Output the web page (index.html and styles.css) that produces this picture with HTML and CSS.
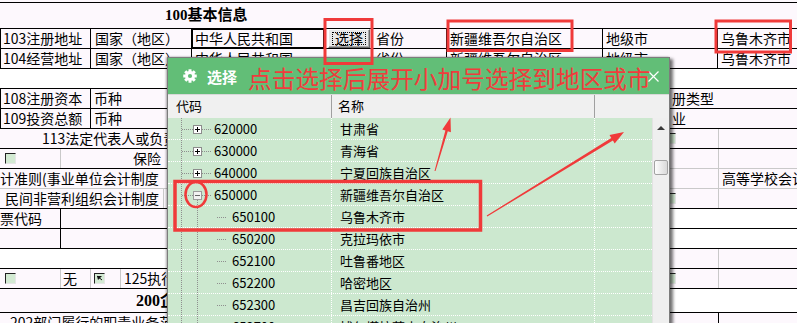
FILE: index.html
```html
<!DOCTYPE html>
<html lang="zh-CN">
<head>
<meta charset="UTF-8">
<title>基本信息 - 选择地区</title>
<link rel="stylesheet" href="styles.css">
</head>
<body>
<div class="page">
  <div class="topline"></div>
  <div class="caption">100基本信息</div>

  <!-- address rows -->
  <div class="row">
    <div class="c w-label first">103注册地址</div>
    <div class="c w-country nob">国家（地区）</div>
    <div class="c w-input active">中华人民共和国</div>
    <div class="c w-btn nob"><span class="btn"><span class="focus">选择</span></span></div>
    <div class="c w-prov">省份</div>
    <div class="c w-provv">新疆维吾尔自治区</div>
    <div class="c w-city">地级市</div>
    <div class="c w-cityv nob">乌鲁木齐市</div>
  </div>
  <div class="row">
    <div class="c w-label first">104经营地址</div>
    <div class="c w-country nob">国家（地区）</div>
    <div class="c w-input plain">中华人民共和国</div>
    <div class="c w-btn nob"></div>
    <div class="c w-prov">省份</div>
    <div class="c w-provv">新疆维吾尔自治区</div>
    <div class="c w-city">地级市</div>
    <div class="c w-cityv nob">乌鲁木齐市</div>
  </div>

  <div class="lower">
    <div class="col-left">
      <div class="lrow white"></div>
      <div class="lrow">
        <div class="c w-label first">108注册资本</div>
        <div class="c nob">币种</div>
      </div>
      <div class="lrow">
        <div class="c w-label first">109投资总额</div>
        <div class="c nob">币种</div>
      </div>
      <div class="lrow">
        <div class="c nob pad-113">113法定代表人或负责人信息</div>
      </div>
      <div class="lrow">
        <div class="c w-cb gray"><span class="cb"></span></div>
        <div class="c nob grow right-text">保险</div>
      </div>
      <div class="lrow soft">
        <div class="c nob flush">计准则(事业单位会计制度</div>
      </div>
      <div class="lrow">
        <div class="c w-npo gray">民间非营利组织会计制度</div>
      </div>
      <div class="lrow">
        <div class="c w-cb flush">票代码</div>
      </div>
      <div class="lrow">
        <div class="c w-cb"></div>
      </div>
      <div class="lrow white"></div>
      <div class="lrow">
        <div class="c w-cb gray"><span class="cb"></span></div>
        <div class="c w-small gray">无</div>
        <div class="c w-small gray"><span class="cb on"><svg width="9" height="9" viewBox="0 0 9 9"><path d="M2 2h5L3 6z" fill="#111"/><path d="M2 2l5 4" stroke="#111"/></svg></span></div>
        <div class="c nob">125执行情况</div>
      </div>
      <div class="lrow tall">
        <div class="c nob head-200">200企业基本情况</div>
      </div>
      <div class="lrow">
        <div class="c nob pad-202">202部门履行的职责业务范围</div>
      </div>
    </div>

    <div class="col-mid"></div>

    <div class="col-right">
      <div class="lrow white"></div>
      <div class="lrow"><div class="c nob pad-r">册类型</div></div>
      <div class="lrow"><div class="c nob pad-r">业</div></div>
      <div class="lrow">
        <div class="c w-rcb gray"><span class="cb r"></span></div>
        <div class="c nob"></div>
      </div>
      <div class="lrow soft">
        <div class="c w-rcb gray"></div>
        <div class="c nob"></div>
      </div>
      <div class="lrow soft">
        <div class="c w-rcb gray"></div>
        <div class="c nob">高等学校会计制度</div>
      </div>
      <div class="lrow">
        <div class="c w-rcb gray"><span class="cb r"></span></div>
        <div class="c nob"></div>
      </div>
      <div class="lrow white"></div>
      <div class="lrow white"></div>
      <div class="lrow">
        <div class="c w-rcb gray"></div>
        <div class="c nob"></div>
      </div>
      <div class="lrow">
        <div class="c w-rcb gray"><span class="cb r"></span></div>
        <div class="c nob"></div>
      </div>
      <div class="lrow tall white"></div>
      <div class="lrow">
        <div class="c w-rcb"></div>
        <div class="c nob"></div>
      </div>
    </div>
  </div>

  <!-- Select dialog -->
  <div class="dialog">
    <div class="dlg-title">
      <svg class="gear" width="14" height="14" viewBox="0 0 16 16">
        <g fill="#fff">
          <rect x="6.3" y="0.3" width="3.4" height="3.4"/>
          <rect x="6.3" y="0.3" width="3.4" height="3.4" transform="rotate(45 8 8)"/>
          <rect x="6.3" y="0.3" width="3.4" height="3.4" transform="rotate(90 8 8)"/>
          <rect x="6.3" y="0.3" width="3.4" height="3.4" transform="rotate(135 8 8)"/>
          <rect x="6.3" y="0.3" width="3.4" height="3.4" transform="rotate(180 8 8)"/>
          <rect x="6.3" y="0.3" width="3.4" height="3.4" transform="rotate(225 8 8)"/>
          <rect x="6.3" y="0.3" width="3.4" height="3.4" transform="rotate(270 8 8)"/>
          <rect x="6.3" y="0.3" width="3.4" height="3.4" transform="rotate(315 8 8)"/>
          <circle cx="8" cy="8" r="5.6"/>
        </g>
        <circle cx="8" cy="8" r="2.4" fill="#62be77"/>
      </svg>
      <span class="dlg-name">选择</span>
      <svg class="dlg-close" width="11" height="11" viewBox="0 0 11 11">
        <path d="M0.5 0.5l10 10M10.5 0.5l-10 10" stroke="#fff" stroke-width="1.2"/>
      </svg>
    </div>
    <div class="dlg-head">
      <div class="hc hc-code">代码</div>
      <div class="hc hc-name">名称</div>
      <div class="hc hc-rest"></div>
    </div>
    <div class="dlg-main">
      <div class="grid">
        <div class="trow">
          <div class="tc code"><svg class="guide" width="46" height="21"><path class="dot" d="M13.5 0V21M14 11.5H44"/><rect x="25.5" y="7.5" width="8" height="8" fill="#fff" stroke="#8c8c8c"/><path d="M27 11.5H32M29.5 9V14" stroke="#000"/></svg>620000</div>
          <div class="tc name">甘肃省</div>
          <div class="tc rest"></div>
        </div>
        <div class="trow">
          <div class="tc code"><svg class="guide" width="46" height="21"><path class="dot" d="M13.5 0V21M14 11.5H44"/><rect x="25.5" y="7.5" width="8" height="8" fill="#fff" stroke="#8c8c8c"/><path d="M27 11.5H32M29.5 9V14" stroke="#000"/></svg>630000</div>
          <div class="tc name">青海省</div>
          <div class="tc rest"></div>
        </div>
        <div class="trow">
          <div class="tc code"><svg class="guide" width="46" height="21"><path class="dot" d="M13.5 0V21M14 11.5H44"/><rect x="25.5" y="7.5" width="8" height="8" fill="#fff" stroke="#8c8c8c"/><path d="M27 11.5H32M29.5 9V14" stroke="#000"/></svg>640000</div>
          <div class="tc name">宁夏回族自治区</div>
          <div class="tc rest"></div>
        </div>
        <div class="trow">
          <div class="tc code"><svg class="guide" width="46" height="21"><path class="dot" d="M13.5 0V21M14 11.5H44M29.5 16V21"/><rect x="25.5" y="7.5" width="8" height="8" fill="#f2f2f2" stroke="#9c9c9c"/><path d="M27 11.5H32" stroke="#666"/></svg>650000</div>
          <div class="tc name">新疆维吾尔自治区</div>
          <div class="tc rest"></div>
        </div>
        <div class="trow">
          <div class="tc code"><svg class="guide" width="64" height="21"><path class="dot" d="M13.5 0V21M29.5 0V21M49 11.5H58"/></svg>650100</div>
          <div class="tc name">乌鲁木齐市</div>
          <div class="tc rest"></div>
        </div>
        <div class="trow">
          <div class="tc code"><svg class="guide" width="64" height="21"><path class="dot" d="M13.5 0V21M29.5 0V21M49 11.5H58"/></svg>650200</div>
          <div class="tc name">克拉玛依市</div>
          <div class="tc rest"></div>
        </div>
        <div class="trow">
          <div class="tc code"><svg class="guide" width="64" height="21"><path class="dot" d="M13.5 0V21M29.5 0V21M49 11.5H58"/></svg>652100</div>
          <div class="tc name">吐鲁番地区</div>
          <div class="tc rest"></div>
        </div>
        <div class="trow">
          <div class="tc code"><svg class="guide" width="64" height="21"><path class="dot" d="M13.5 0V21M29.5 0V21M49 11.5H58"/></svg>652200</div>
          <div class="tc name">哈密地区</div>
          <div class="tc rest"></div>
        </div>
        <div class="trow">
          <div class="tc code"><svg class="guide" width="64" height="21"><path class="dot" d="M13.5 0V21M29.5 0V21M49 11.5H58"/></svg>652300</div>
          <div class="tc name">昌吉回族自治州</div>
          <div class="tc rest"></div>
        </div>
        <div class="trow">
          <div class="tc code"><svg class="guide" width="64" height="21"><path class="dot" d="M13.5 0V21M29.5 0V21M49 11.5H58"/></svg>652700</div>
          <div class="tc name">博尔塔拉蒙古自治州</div>
          <div class="tc rest"></div>
        </div>
      </div>
      <div class="vscroll">
        <span class="up"></span>
        <span class="thumb"></span>
      </div>
    </div>
  </div>

  <!-- red annotations drawn over the screenshot -->
  <div class="note">点击选择后展开小加号选择到地区或市</div>
  <svg class="marks" width="797" height="323" viewBox="0 0 797 323">
    <g fill="none" stroke="#f03a3a" stroke-width="3">
      <rect x="325" y="19.5" width="47" height="44"/>
      <rect x="448" y="21" width="124" height="29.5"/>
      <rect x="716" y="21" width="74.5" height="31"/>
      <rect x="175" y="181.5" width="305.5" height="48.5" stroke-width="3.5"/>
      <ellipse cx="196" cy="194.5" rx="10.5" ry="12.5" stroke-width="2.5"/>
    </g>
    <g fill="#f03a3a">
      <polygon points="487.3,216.4 612.9,140.6 614.7,143.6 624,132 609.5,135 611.3,138 486.7,215.6"/>
      <polygon points="435.5,171.1 447.8,131.3 450.9,132.2 450.5,117.5 442.3,129.6 445.4,130.5 434.5,170.9"/>
    </g>
  </svg>
</div>
</body>
</html>
```

FILE: styles.css
```css
/* General styles */
* {
  box-sizing: border-box;
}

html,
body {
  margin: 0;
  padding: 0;
  overflow: hidden;
}

body {
  font-family: "Noto Sans CJK SC", sans-serif;
  font-size: 14px;
  color: #000;
  background-color: #fdf8fd;
}

.page {
  position: relative;
  width: 797px;
  height: 323px;
  overflow: hidden;
}

.topline {
  height: 3px;
  border-bottom: 1px solid #000;
}

.caption {
  height: 26px;
  border-bottom: 1px solid #000;
  padding-left: 165px;
  font-family: "Liberation Serif", "Noto Sans CJK SC", serif;
  font-weight: bold;
  font-size: 15px;
  line-height: 25px;
}

/* form rows */
.row,
.lrow {
  display: flex;
  height: 20px;
  border-bottom: 1px solid #000;
  line-height: 19px;
  white-space: nowrap;
  overflow: hidden;
}

.lrow.soft {
  border-bottom-color: #c9c9c9;
}

.lrow.white {
  background-color: #fff;
}

.lrow.tall {
  height: 24px;
  line-height: 23px;
}

.c {
  flex: none;
  height: 100%;
  padding-left: 3px;
  border-right: 1px solid #000;
  overflow: hidden;
}

.c.nob {
  border-right: none;
}

.c.gray {
  border-right-color: #c9c9c9;
}

.c.grow {
  flex: 1;
}

.c.first {
  border-left: 1px solid #000;
  padding-left: 2px;
}

.w-label {
  width: 91px;
}

.w-country {
  width: 100px;
  padding-left: 4px;
}

.w-input {
  width: 134px;
  padding-left: 2px;
}

.w-input.active {
  height: 21px;
  margin-top: -1px;
  border: 2px solid #000;
  line-height: 17px;
}

.w-input.plain {
  border-left: 1px solid #000;
  border-right: none;
  padding-left: 3px;
}

.w-btn {
  width: 47px;
}

.w-prov {
  width: 75px;
  padding-left: 4px;
}

.w-provv {
  width: 156px;
}

.w-city {
  width: 115px;
}

.w-cityv {
  width: 79px;
}

.btn {
  display: block;
  width: 42px;
  height: 19px;
  margin-left: 0;
  padding: 2px 3px;
  background-color: #e8e8e8;
  border: 1px solid;
  border-color: #fff #6a6a6a #6a6a6a #fff;
  box-shadow: inset -1px -1px 0 #a8a8a8;
}

.focus {
  display: block;
  height: 13px;
  border: 1px dotted #000;
  font-size: 14px;
  line-height: 11px;
  text-align: center;
}

/* lower part: left and right strips beside the dialog */
.lower {
  display: flex;
}

.col-left {
  width: 168px;
  flex: none;
}

.col-mid {
  width: 496px;
  flex: none;
}

.col-right {
  width: 133px;
  flex: none;
}

.pad-113 {
  padding-left: 42px;
}

.right-text {
  text-align: right;
  padding-right: 7px;
}

.flush {
  padding-left: 0;
}

.w-npo {
  width: 164px;
  padding-left: 5px;
}

.w-cb {
  width: 61px;
}

.w-small {
  width: 30px;
  padding-left: 2px;
}

.w-rcb {
  width: 55px;
  padding-left: 1px;
}

.pad-r {
  padding-left: 8px;
}

.head-200 {
  padding-left: 136px;
  font-family: "Liberation Serif", "Noto Sans CJK SC", serif;
  font-weight: bold;
  font-size: 16px;
}

.pad-202 {
  padding-left: 10px;
}

.cb {
  display: inline-block;
  width: 11px;
  height: 11px;
  margin: 4px 0 0 2px;
  vertical-align: top;
  background-color: #d3ead3;
  border: 1px solid;
  border-color: #222 #e6e6e6 #e6e6e6 #222;
}

.cb.on {
  margin-left: 1px;
}

.cb.on svg {
  display: block;
}

.cb.r {
  margin-left: 0;
}

/* Select dialog */
.dialog {
  position: absolute;
  left: 167px;
  top: 57px;
  width: 503px;
  height: 300px;
  background-color: #f0f0f0;
  border: 1px solid #7c7c7c;
  box-shadow: 3px 2px 3px rgba(0, 0, 0, 0.55), -1px 0 2px rgba(0, 0, 0, 0.35);
  font-size: 13px;
}

.dlg-title {
  display: flex;
  align-items: center;
  height: 36px;
  padding-left: 15px;
  background-color: #62be77;
  color: #fff;
}

.gear {
  display: block;
}

.dlg-name {
  margin-left: 10px;
  font-size: 15px;
  font-weight: bold;
}

.dlg-close {
  display: block;
  margin-left: auto;
  margin-right: 10px;
}

.dlg-head {
  display: flex;
  height: 24px;
  border-top: 1px solid #d8d8d8;
  line-height: 22px;
  background-color: #f0f0f0;
}

.hc {
  height: 100%;
  border-right: 1px solid #a0a0a0;
}

.hc-code {
  width: 164px;
  padding-left: 8px;
}

.hc-name {
  width: 263px;
  padding-left: 6px;
}

.hc-rest {
  flex: 1;
  border-right: none;
}

.dlg-main {
  display: flex;
}

.grid {
  width: 484px;
  background-color: #cce8cf;
}

.trow {
  display: flex;
  height: 22px;
  border-bottom: 1px dotted #fff;
  line-height: 21px;
  white-space: nowrap;
}

.tc {
  height: 21px;
  border-right: 1px dotted #fff;
}

.tc.code {
  display: flex;
  width: 164px;
}

.tc.name {
  width: 263px;
  padding-left: 8px;
}

.tc.rest {
  flex: 1;
  border-right: none;
}

.guide {
  display: block;
  flex: none;
}

.guide .dot {
  fill: none;
  stroke: #8f8f8f;
  stroke-dasharray: 1 1;
}

.vscroll {
  display: flex;
  flex-direction: column;
  align-items: center;
  width: 16px;
  background-color: #efefef;
  border-left: 1px solid #e2e2e2;
}

.up {
  width: 0;
  height: 0;
  margin-top: 8px;
  border-left: 4px solid transparent;
  border-right: 4px solid transparent;
  border-bottom: 4px solid #3a3a3a;
}

.thumb {
  width: 14px;
  height: 15px;
  margin-top: 30px;
  border: 1px solid #a3a3a3;
  border-radius: 2px;
  background: linear-gradient(to right, #fdfdfd, #d9d9d9);
}

/* red annotations */
.note {
  position: absolute;
  left: 248px;
  top: 64px;
  font-size: 23.7px;
  line-height: 28px;
  color: #f03c3c;
  white-space: nowrap;
}

.marks {
  position: absolute;
  left: 0;
  top: 0;
  pointer-events: none;
}
```
